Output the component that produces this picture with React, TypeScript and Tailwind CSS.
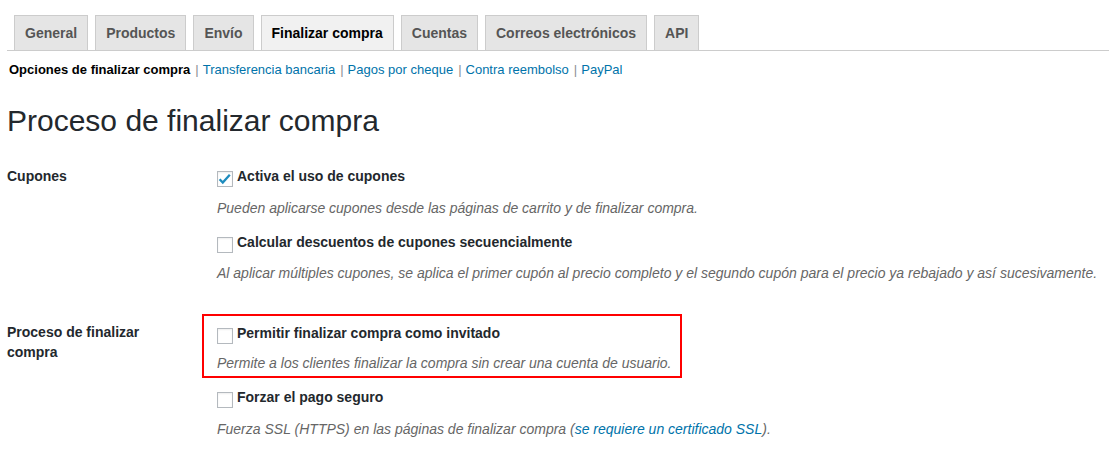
import React from 'react';

const tabs = ['General', 'Productos', 'Envío', 'Finalizar compra', 'Cuentas', 'Correos electrónicos', 'API'];
const sections = ['Opciones de finalizar compra', 'Transferencia bancaria', 'Pagos por cheque', 'Contra reembolso', 'PayPal'];

function Checkbox({ checked }: { checked?: boolean }) {
	return (
		<span className="relative mt-[5px] mr-[4px] block h-4 w-4 shrink-0 border border-[#b4b9be] bg-white shadow-[inset_0_1px_2px_rgba(0,0,0,0.07)]">
			{checked && (
				<svg className="absolute left-[-1px] top-[-1px]" width="16" height="16" viewBox="0 0 16 16">
					<polyline points="2.6,8.2 5.8,11.6 12.8,3.8" fill="none" stroke="#1e8cbe" strokeWidth="2.3" />
				</svg>
			)}
		</span>
	);
}

function Option({ label, checked, className = '' }: { label: string; checked?: boolean; className?: string }) {
	return (
		<label className={`flex h-5 items-start text-[14px] font-bold leading-5 text-[#23282d] ${className}`}>
			<Checkbox checked={checked} />
			{label}
		</label>
	);
}

function Description({ children, className = '' }: { children: React.ReactNode; className?: string }) {
	return <p className={`text-[14px] italic leading-5 text-[#666] ${className}`}>{children}</p>;
}

export default function App() {
	return (
		<div className="min-h-screen bg-white pl-[7px] font-['Liberation_Sans',Arial,sans-serif] text-[#23282d]">
			{/* pestañas */}
			<nav className="flex h-[51px] items-end gap-[7px] border-b border-[#ccc] pl-[7px]">
				{tabs.map(tab => {
					const active = tab === 'Finalizar compra';
					return (
						<a
							key={tab}
							className={`h-[35px] border border-b-0 border-[#ccc] px-[10px] py-[5px] text-[14px] font-bold leading-6 whitespace-nowrap ${
								active ? 'bg-[#f1f1f1] text-black' : 'bg-[#e5e5e5] text-[#555]'
							}`}
						>
							{tab}
						</a>
					);
				})}
			</nav>

			{/* secciones */}
			<ul className="mt-[9px] flex h-5 items-center pl-[2px] text-[13px] leading-5 text-[#555]">
				{sections.map((s, i) => (
					<li key={s} className="flex items-center whitespace-nowrap">
						{i > 0 && <span className="ml-[5px] mr-[4px] text-[#8c8f94]">|</span>}
						{i === 0 ? <span className="font-bold text-black">{s}</span> : <a className="text-[#0073aa]">{s}</a>}
					</li>
				))}
			</ul>

			<h1 className="mt-[23px] text-[30px] font-normal leading-[36px] text-[#23282d]">Proceso de finalizar compra</h1>

			{/* Cupones */}
			<div className="mt-[27px] flex">
				<div className="w-[210px] shrink-0 text-[14px] font-bold leading-5">Cupones</div>
				<div>
					<Option label="Activa el uso de cupones" checked />
					<Description className="mt-[12px]">Pueden aplicarse cupones desde las páginas de carrito y de finalizar compra.</Description>
					<Option label="Calcular descuentos de cupones secuencialmente" className="mt-[14px]" />
					<Description className="mt-[11px]">
						Al aplicar múltiples cupones, se aplica el primer cupón al precio completo y el segundo cupón para el precio ya
						rebajado y así sucesivamente.
					</Description>
				</div>
			</div>

			{/* Proceso de finalizar compra */}
			<div className="mt-[40px] flex">
				<div className="w-[210px] shrink-0 pr-[40px] text-[14px] font-bold leading-[19.5px]">Proceso de finalizar compra</div>
				<div>
					<div className="relative">
						<Option label="Permitir finalizar compra como invitado" />
						<Description className="mt-[10px]">Permite a los clientes finalizar la compra sin crear una cuenta de usuario.</Description>
						<div className="pointer-events-none absolute left-[-15px] top-[-9px] h-[64px] w-[480px] border-2 border-[#f00]" />
					</div>
					<Option label="Forzar el pago seguro" className="mt-[14px]" />
					<Description className="mt-[12px]">
						Fuerza SSL (HTTPS) en las páginas de finalizar compra (<a className="text-[#0073aa]">se requiere un certificado SSL</a>).
					</Description>
				</div>
			</div>
		</div>
	);
}
